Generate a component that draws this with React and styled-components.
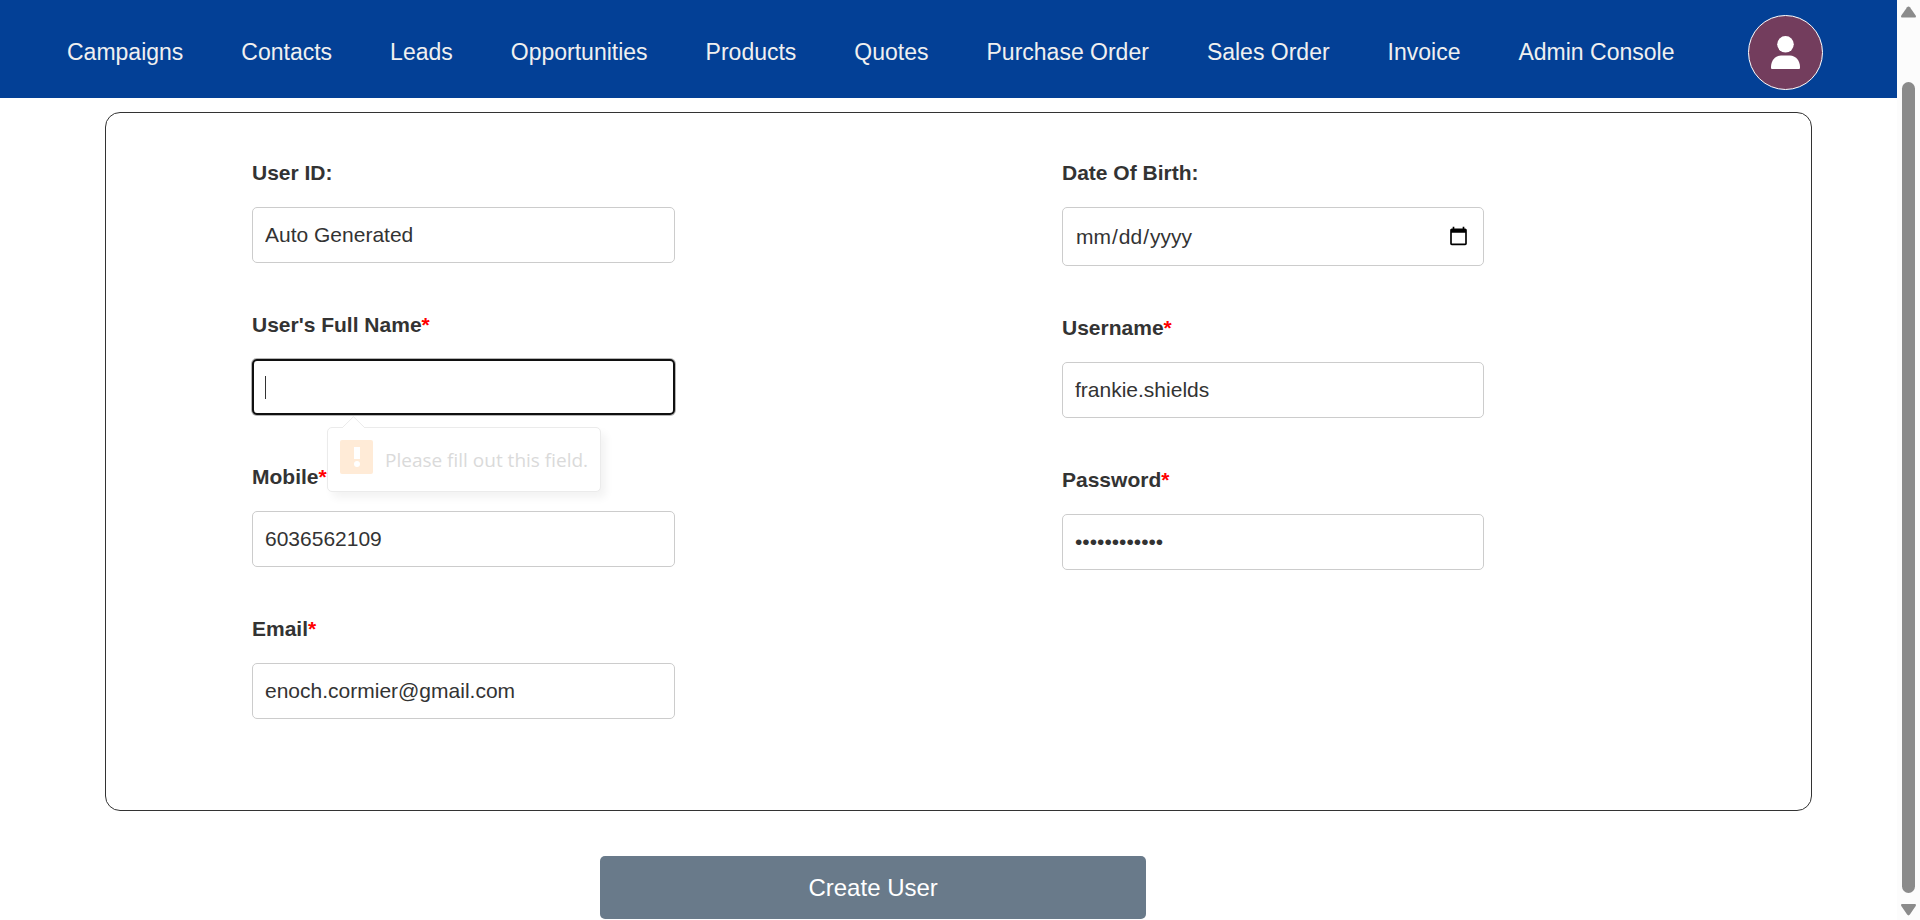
import React from "react";
import styled, { createGlobalStyle, css } from "styled-components";

const GlobalStyle = createGlobalStyle`
  *, *::before, *::after { box-sizing: border-box; }
  html, body { margin: 0; height: 100%; overflow: hidden; }
  body {
    background: #fff;
    color: #333;
    font-family: Arial, "Liberation Sans", sans-serif;
    font-size: 21px;
    line-height: 24px;
  }
`;

const Shell = styled.div`
  display: flex;
  height: 100vh;
  overflow: hidden;
`;

const Page = styled.div`
  flex: 1;
  min-width: 0;
  overflow: hidden;
`;

const NavBar = styled.nav`
  display: flex;
  align-items: center;
  justify-content: space-between;
  padding: 15px 74px 8px 67px;
  background: #034096;
`;

const NavList = styled.ul`
  display: flex;
  align-items: center;
  gap: 58px;
  margin: 0;
  padding: 0 0 2px;
  list-style: none;
`;

const NavLink = styled.a`
  color: #f0f0f0;
  font-size: 23px;
  line-height: 28px;
  white-space: nowrap;
  text-decoration: none;
`;

const Avatar = styled.button`
  display: grid;
  place-items: center;
  flex: none;
  width: 75px;
  height: 75px;
  padding: 0;
  border: 1px solid #fff;
  border-radius: 50%;
  background: #733d5d;
`;

const Main = styled.main`
  padding: 14px 85px 0 105px;
`;

const Card = styled.section`
  display: grid;
  grid-template-columns: 146fr 423fr 387fr 422fr 327fr;
  padding: 48px 0 91px;
  border: 1px solid #333;
  border-radius: 15px;
`;

const Column = styled.div`
  display: flex;
  flex-direction: column;
  gap: 50px;
  grid-column: ${(p) => p.$track};
`;

const Field = styled.div`
  display: flex;
  flex-direction: column;
  gap: 22px;
`;

const Label = styled.label`
  font-weight: 700;
`;

const Required = styled.span`
  color: #f00;
`;

const Control = styled.div`
  position: relative;
  display: flex;
`;

const Input = styled.input`
  width: 100%;
  min-width: 0;
  padding: 15px 12px;
  border: 1px solid #ccc;
  border-radius: 5px;
  background: #fff;
  color: #333;
  font-family: inherit;
  font-size: 21px;
  line-height: 24px;
  outline: none;
  &[type="date"] {
    min-height: 59px;
  }
  ${(p) =>
    p.$active &&
    css`
      caret-color: transparent;
      outline: 2px solid #101010;
      outline-offset: -2px;
      box-shadow: 0 0 0 1px #b4b4b4;
    `}
`;

const Caret = styled.span`
  position: absolute;
  top: 17px;
  left: 13px;
  width: 1px;
  height: 23px;
  background: #333;
`;

const Bubble = styled.div`
  position: absolute;
  z-index: 2;
  top: 100%;
  left: 75px;
  display: flex;
  align-items: center;
  gap: 12px;
  margin-top: 12px;
  padding: 12px 12px 17px;
  border: 1px solid #ebebeb;
  border-radius: 5px;
  background: #fff;
  box-shadow: 5px 6px 8px rgba(0, 0, 0, 0.05);
`;

const BubbleArrow = styled.svg`
  position: absolute;
  top: -12px;
  left: 14px;
`;

const BubbleText = styled.span`
  padding-top: 6px;
  color: #dadada;
  font-family: "Segoe UI", "Open Sans", sans-serif;
  font-size: 19px;
  line-height: 28px;
  white-space: nowrap;
`;

const SubmitButton = styled.button`
  display: block;
  width: 32%;
  height: 63px;
  margin: 45px 0 0 29%;
  border: 0;
  border-radius: 5px;
  background: #697a8a;
  color: #fff;
  font-family: inherit;
  font-size: 24px;
`;

const ScrollBar = styled.div`
  display: flex;
  flex: none;
  flex-direction: column;
  align-items: center;
  width: 23px;
  padding: 6px 0 4px;
  background: #fcfcfc;
`;

const ScrollTrack = styled.div`
  flex: 1;
  width: 13px;
  padding: 64px 0 11px;
`;

const ScrollThumb = styled.div`
  height: 100%;
  border-radius: 7px;
  background: #8b8b8b;
`;

const links = [
  "Campaigns",
  "Contacts",
  "Leads",
  "Opportunities",
  "Products",
  "Quotes",
  "Purchase Order",
  "Sales Order",
  "Invoice",
  "Admin Console",
];

const leftFields = [
  { id: "user-id", label: "User ID:", value: "Auto Generated", readOnly: true },
  { id: "full-name", label: "User's Full Name", required: true, value: "", active: true, message: "Please fill out this field." },
  { id: "mobile", label: "Mobile", required: true, value: "6036562109", type: "tel" },
  { id: "email", label: "Email", required: true, value: "enoch.cormier@gmail.com", type: "email" },
];

const rightFields = [
  { id: "dob", label: "Date Of Birth:", value: "", type: "date" },
  { id: "username", label: "Username", required: true, value: "frankie.shields" },
  { id: "password", label: "Password", required: true, value: "secret-12345", type: "password" },
];

function UserIcon() {
  return (
    <svg width="29" height="33" viewBox="0 0 29 33" fill="#fff" aria-hidden="true">
      <circle cx="14.5" cy="8.3" r="8.3" />
      <path d="M0 31c0-6.500 4.500-11.500 10-11.500h9c5.500 0 10 5 10 11.500v1a1 1 0 0 1-1 1H1a1 1 0 0 1-1-1Z" />
    </svg>
  );
}

function WarningIcon() {
  return (
    <svg width="33" height="34" viewBox="0 0 33 34" aria-hidden="true">
      <rect width="33" height="34" rx="2" fill="#ffebd7" />
      <rect x="14" y="7" width="6" height="12" fill="#fff" />
      <circle cx="17" cy="24" r="3" fill="#fff" />
    </svg>
  );
}

function ScrollArrow({ down }) {
  return (
    <svg width="15" height="12" viewBox="0 0 15 12" fill="#8b8b8b" aria-hidden="true">
      <path
        d={
          down
            ? "M1.200 0h12.600c1 0 1.500 1 .9 1.900L8.900 10.600c-.8 1.100-2 1.100-2.800 0L.3 1.900C-.3 1 .2 0 1.200 0Z"
            : "M1.200 11.500h12.600c1 0 1.500-1 .9-1.900L8.900 1.200c-.8-1.100-2-1.100-2.800 0L.3 9.600c-.6.9-.1 1.900.9 1.900Z"
        }
      />
    </svg>
  );
}

function FormField({ id, label, required, value, type = "text", active, message, readOnly }) {
  return (
    <Field>
      <Label htmlFor={id}>
        {label}
        {required && <Required>*</Required>}
      </Label>
      <Control>
        <Input id={id} type={type} defaultValue={value} readOnly={readOnly} required={required} $active={active} />
        {active && <Caret />}
        {message && (
          <Bubble role="alert">
            <BubbleArrow width="24" height="12" viewBox="0 0 24 12" aria-hidden="true">
              <path d="M0 12 11.500.7 23 12" fill="#fff" stroke="#ebebeb" />
            </BubbleArrow>
            <WarningIcon />
            <BubbleText>{message}</BubbleText>
          </Bubble>
        )}
      </Control>
    </Field>
  );
}

export default function App() {
  return (
    <Shell>
      <GlobalStyle />
      <Page>
        <NavBar>
          <NavList>
            {links.map((name) => (
              <li key={name}>
                <NavLink href="#">{name}</NavLink>
              </li>
            ))}
          </NavList>
          <Avatar type="button" aria-label="Account">
            <UserIcon />
          </Avatar>
        </NavBar>
        <Main>
          <form onSubmit={(e) => e.preventDefault()} noValidate>
            <Card>
              <Column $track={2}>
                {leftFields.map((f) => (
                  <FormField key={f.id} {...f} />
                ))}
              </Column>
              <Column $track={4}>
                {rightFields.map((f) => (
                  <FormField key={f.id} {...f} />
                ))}
              </Column>
            </Card>
            <SubmitButton type="submit">Create User</SubmitButton>
          </form>
        </Main>
      </Page>
      <ScrollBar aria-hidden="true">
        <ScrollArrow />
        <ScrollTrack>
          <ScrollThumb />
        </ScrollTrack>
        <ScrollArrow down />
      </ScrollBar>
    </Shell>
  );
}
